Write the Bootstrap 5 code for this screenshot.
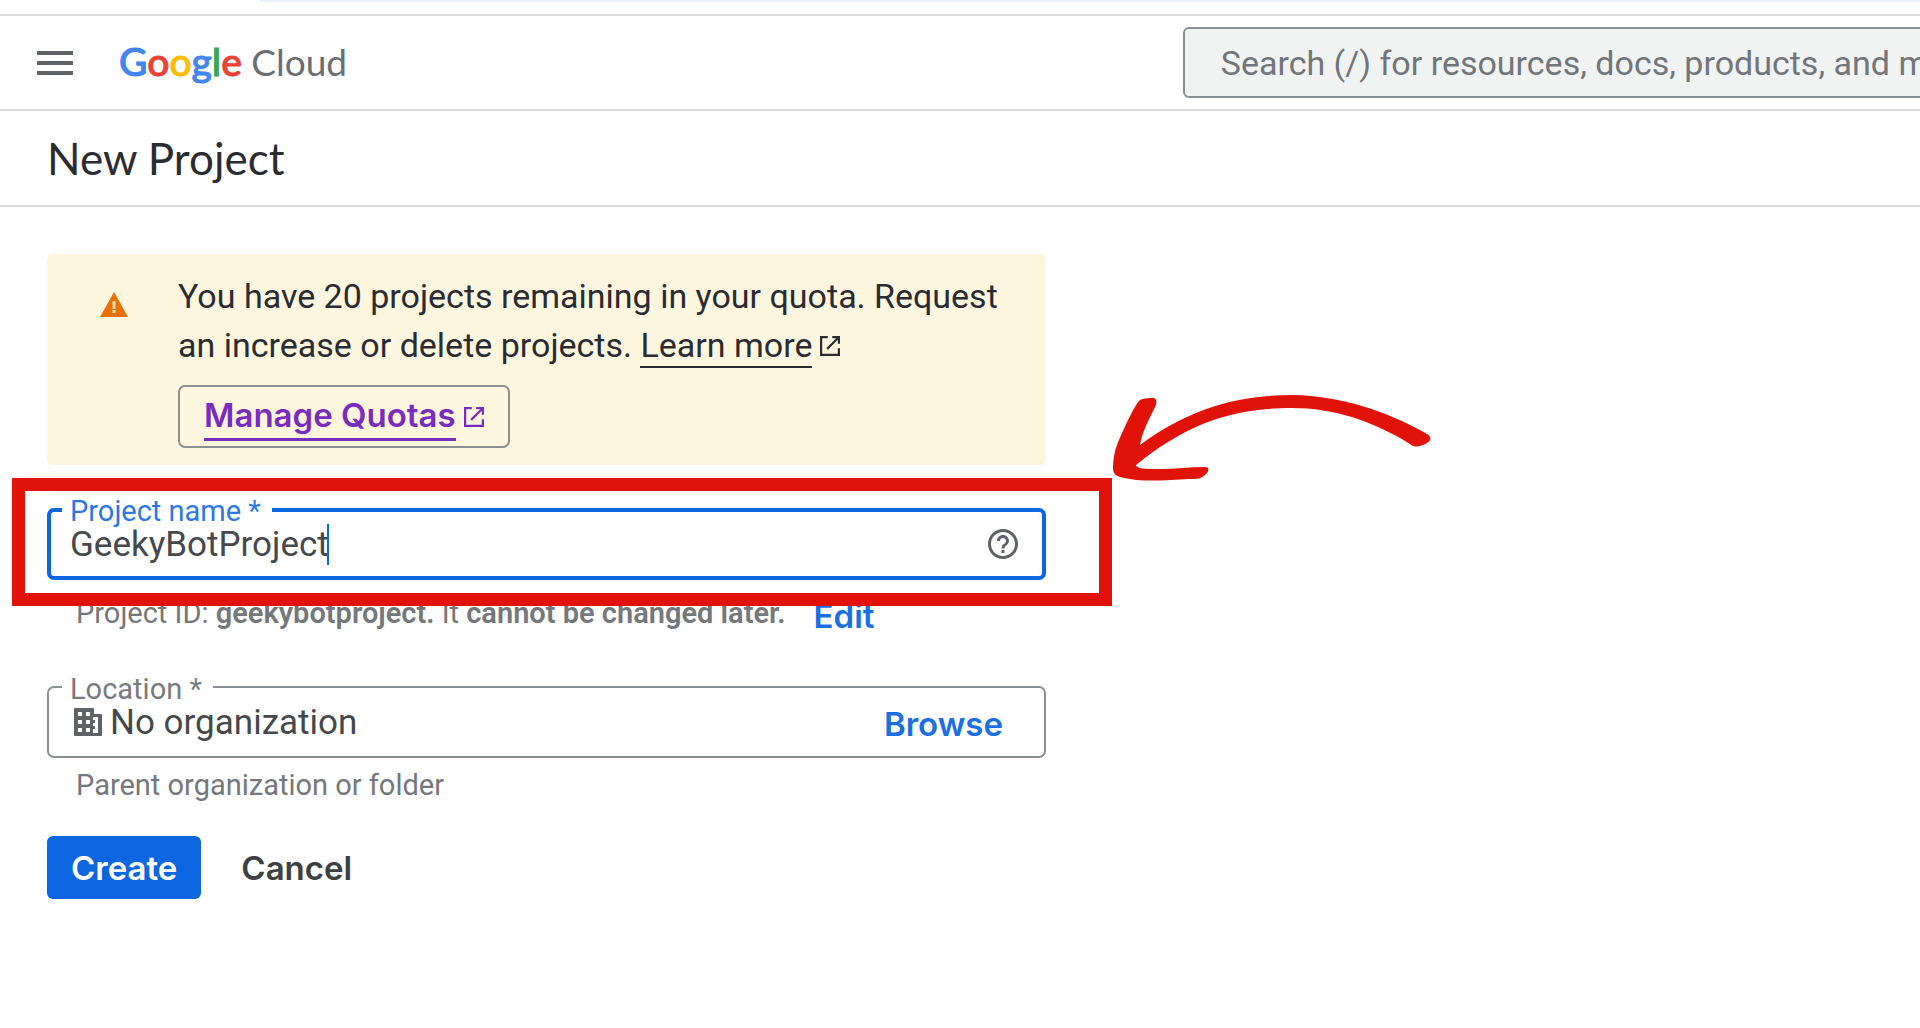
<!DOCTYPE html>
<html lang="en">
<head>
<meta charset="utf-8">
<meta name="viewport" content="width=device-width, initial-scale=1">
<title>New Project – Google Cloud</title>
<link href="https://cdn.jsdelivr.net/npm/bootstrap@5.3.0/dist/css/bootstrap.min.css" rel="stylesheet">
<style>
  :root { --gc-blue: #0b66e0; --gc-line: #dadce0; --gc-grey: #5f6368; --gc-outline: #8b9095; --gc-red: #e11207; }
  body { font-family: Roboto, sans-serif; font-size: 34px; line-height: 49px; color: #2b2c33; background: #fff; overflow-x: hidden; }
  .display-face { font-family: Lato, Roboto, sans-serif; }
  .action-face { font-family: Inter, Roboto, sans-serif; font-weight: 600; font-size: 33px; }
  .tab-strip { height: 14px; }
  .tab-strip-edge { height: 2px; margin-left: 260px; background: #eef2fc; }
  .top-bar { border-top: 2px solid var(--gc-line); border-bottom: 2px solid var(--gc-line); height: 97px; }
  .top-bar-start { flex: 0 0 61.6%; padding-left: 37px; gap: 46px; }
  .brand-link { font-size: 37px; line-height: 48px; padding-bottom: 3px; color: #6a6e73; }
  .brand-link b { font-weight: 500; font-size: 39px; -webkit-text-stroke: 1px; }
  .search-box { flex: 0 0 1100px; height: 71px; border: 2px solid var(--gc-outline); border-radius: 6px; background: #f1f3f3; padding: 0 36px; font-size: 34px; color: var(--gc-grey); }
  .search-box::placeholder { color: #72767b; opacity: 1; }
  .title-bar { border-bottom: 2px solid var(--gc-line); height: 96px; padding: 0 47px; }
  .title-bar h1 { font-size: 44px; line-height: 52px; }
  .page-main { padding: 47px; }
  .form-column { max-width: 999px; }
  .quota-note { background: #fdf6df; border-radius: 6px; padding: 18px 30px 17px 52px; gap: 49px; margin-bottom: 43px; }
  .quota-note > svg { margin-top: 17px; }
  .text-link { color: inherit; text-decoration: none; gap: 8px; }
  .text-link span { line-height: 42px; border-bottom: 2px solid; }
  .outline-btn { height: 63px; border: 2px solid var(--gc-outline); border-radius: 7px; padding: 0 24px; margin-top: 15px; gap: 8px; color: #7a2cbf; text-decoration: none; }
  .outline-btn span { line-height: 46px; border-bottom: 3px solid; }
  .field-shell { height: 72px; border: 2px solid var(--gc-outline); border-radius: 7px; padding: 0 25px; }
  .field-shell.focused { border: 4px solid var(--gc-blue); padding: 0 21px 0 19px; }
  .field-label { position: absolute; left: 13px; top: -16px; padding: 0 11px 0 8px; background: #fff; font-size: 29px; line-height: 34px; color: #777b80; }
  .focused .field-label { left: 11px; top: -18px; color: #2b78e6; }
  .field-text { border: 0; outline: 0; padding: 0; background: transparent; color: #45484d; font-size: 35px; height: 41px; line-height: 41px; }
  .name-input { width: 257px; }
  .caret { width: 2px; height: 41px; background: var(--gc-blue); }
  .callout-box { position: absolute; left: -35px; right: -66px; top: -30px; height: 128px; border: 13px solid var(--gc-red); z-index: 2; pointer-events: none; }
  .callout-arrow { position: absolute; left: 1065px; top: -115px; z-index: 2; pointer-events: none; }
  .hint { font-size: 29px; line-height: 34px; color: #74777c; padding-left: 29px; }
  .hint b { font-weight: 600; }
  .id-row { gap: 28px; margin-bottom: 50px; }
  .plain-btn { border: 0; background: transparent; padding: 0; line-height: 40px; color: #1a6fe4; text-decoration: none; }
  .parent-hint { margin: 10px 0 34px; }
  .create-btn { height: 63px; padding: 0 24px; border-radius: 6px; background: var(--gc-blue); color: #fff; }
  .cancel-btn { color: #3c4043; }
</style>
</head>
<body>
<div class="tab-strip"><div class="tab-strip-edge"></div></div>
<header class="top-bar d-flex align-items-center overflow-hidden">
  <div class="top-bar-start d-flex align-items-center">
    <button type="button" class="btn p-0 border-0 d-flex" aria-label="Main menu">
      <svg width="36" height="24" viewBox="0 0 36 24" fill="#5f6368"><path d="M0 0h36v4H0zM0 10h36v4H0zM0 20h36v4H0z"/></svg>
    </button>
    <a href="#" class="brand-link display-face text-decoration-none text-nowrap"><b><span style="color:#4285f4">G</span><span style="color:#ea4335">o</span><span style="color:#fbbc04">o</span><span style="color:#4285f4">g</span><span style="color:#34a853">l</span><span style="color:#ea4335">e</span></b> Cloud</a>
  </div>
  <input type="search" class="search-box" aria-label="Search" placeholder="Search (/) for resources, docs, products, and more">
</header>
<div class="title-bar d-flex align-items-center">
  <h1 class="display-face fw-normal m-0">New Project</h1>
</div>
<main class="page-main">
  <form class="form-column">
    <div class="quota-note d-flex align-items-start">
      <svg class="flex-shrink-0" width="30" height="30" viewBox="0 0 30 30"><path d="M15 3 29 28H1z" fill="#e8710a"/><path d="M13.500 12h3v8h-3zM13.500 21h3v3h-3z" fill="#fbdcae"/></svg>
      <div>
        <div>You have 20 projects remaining in your quota. Request an increase or delete projects. <a href="#" class="text-link d-inline-flex align-items-center"><span>Learn more</span><svg width="20" height="20" viewBox="3 3 18 18" fill="currentColor"><path d="M19 19H5V5h5V3H3v18h18v-7h-2zM14 3v2h3.600l-8.900 8.900 1.400 1.400L19 6.400V10h2V3z"/></svg></a></div>
        <a href="#" class="outline-btn action-face d-inline-flex align-items-center"><span>Manage Quotas</span><svg width="20" height="20" viewBox="3 3 18 18" fill="currentColor"><path d="M19 19H5V5h5V3H3v18h18v-7h-2zM14 3v2h3.600l-8.900 8.900 1.400 1.400L19 6.400V10h2V3z"/></svg></a>
      </div>
    </div>

    <div class="position-relative">
      <div class="field-shell focused position-relative d-flex align-items-center">
        <label class="field-label" for="projectName">Project name *</label>
        <input id="projectName" class="field-text name-input" type="text" value="GeekyBotProject">
        <span class="caret"></span>
        <button type="button" class="btn p-0 border-0 d-flex ms-auto" aria-label="Help">
          <svg width="36" height="36" viewBox="0 0 24 24" fill="#5f6368"><path d="M11 18h2v-2h-2v2zm1-16C6.480 2 2 6.480 2 12s4.480 10 10 10 10-4.480 10-10S17.520 2 12 2zm0 18c-4.410 0-8-3.590-8-8s3.590-8 8-8 8 3.590 8 8-3.590 8-8 8zm0-14c-2.210 0-4 1.790-4 4h2c0-1.100.9-2 2-2s2 .9 2 2c0 2-3 1.750-3 5h2c0-2.250 3-2.500 3-5 0-2.210-1.790-4-4-4z"/></svg>
        </button>
      </div>
      <div class="callout-box"></div>
      <svg class="callout-arrow" width="320" height="90" viewBox="1112 393 320 90" fill="#e11207"><path d="M1139 401C1142 398 1149 398 1154 398C1157 399 1157 403 1155 407C1148 421 1142 433 1140 445C1190 408 1238 395 1293 395C1340 396 1385 410 1427 434C1432 437 1431 441 1427 443C1420 447 1415 448 1410 444C1372 420 1330 407 1288 408C1225 409 1183 427 1136 465C1137 469 1144 469 1160 469C1175 469 1190 467 1205 467C1210 467 1209 471 1206 474C1201 479 1197 479 1189 479C1170 480 1145 482 1130 479C1118 477 1113 476 1113 468C1113 455 1116 446 1122 433C1128 420 1134 407 1139 401Z"/></svg>
    </div>
    <div class="hint id-row d-flex align-items-start pt-3">
      <span>Project ID: <b>geekybotproject.</b> It <b>cannot be changed later.</b></span>
      <a href="#" class="plain-btn action-face">Edit</a>
    </div>

    <div class="field-shell position-relative d-flex align-items-center">
      <label class="field-label" for="location">Location *</label>
      <svg class="flex-shrink-0 me-2" width="28" height="28" viewBox="0 0 28 28" fill="#5f6368" fill-rule="evenodd"><path d="M1 0h18q1 0 1 1v5h7q1 0 1 1v20q0 1-1 1H1q-1 0-1-1V1Q0 0 1 0zM4 4v4h4V4zM12 4v4h4V4zM4 12v4h4v-4zM12 12v4h4v-4zM4 20v4h4v-4zM12 20v4h4v-4zM19 9v3h2v3h-2v3h2v3h-2v4h5V9z"/></svg>
      <input id="location" class="field-text flex-grow-1" type="text" value="No organization" readonly>
      <button type="button" class="plain-btn action-face me-3 pt-1">Browse</button>
    </div>
    <div class="hint parent-hint">Parent organization or folder</div>

    <div class="d-flex align-items-center gap-3">
      <button type="submit" class="plain-btn create-btn action-face">Create</button>
      <button type="button" class="plain-btn cancel-btn action-face px-4">Cancel</button>
    </div>
  </form>
</main>
<script src="https://cdn.jsdelivr.net/npm/bootstrap@5.3.0/dist/js/bootstrap.bundle.min.js"></script>
</body>
</html>
